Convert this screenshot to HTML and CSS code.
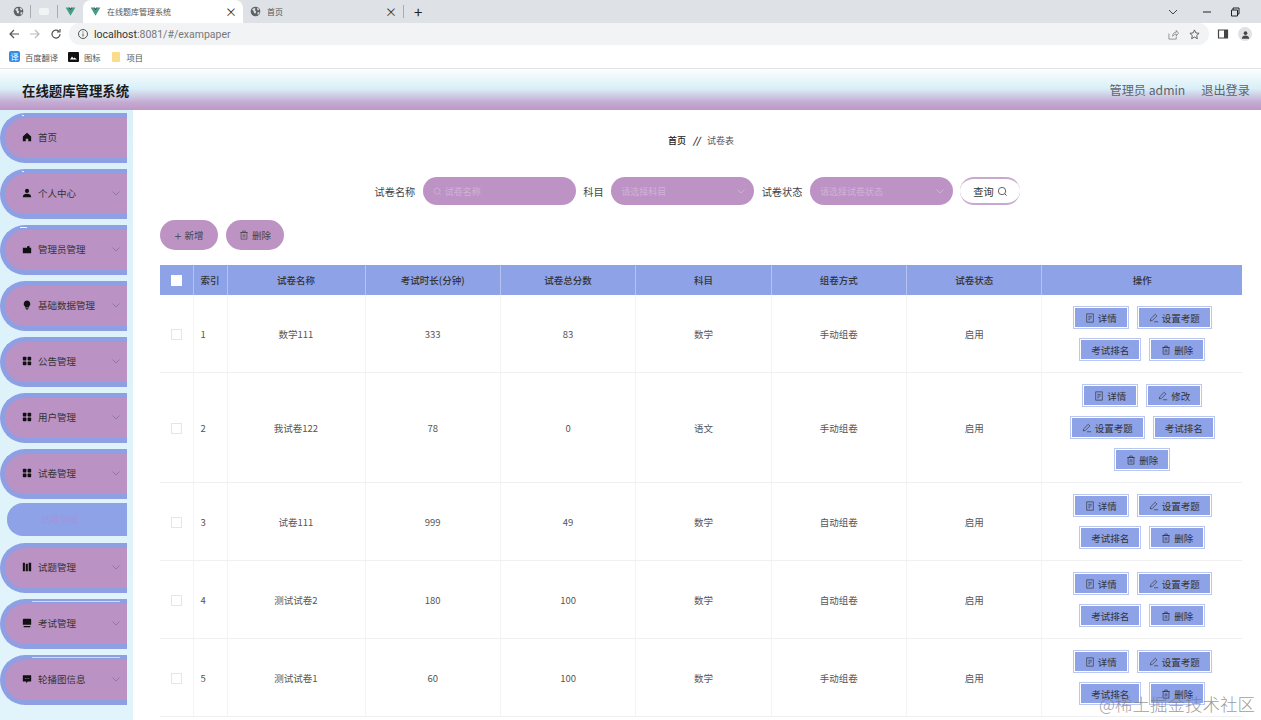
FILE: index.html
```html
<!DOCTYPE html>
<html lang="en">
<head>
  <meta charset="UTF-8">
  <meta name="viewport" content="width=device-width, initial-scale=1">
  <title>在线题库管理系统</title>
  <link rel="stylesheet" href="styles.css">
</head>
<body>

  <!-- shared icons -->
  <svg class="sprite" width="0" height="0">
    <symbol id="i-globe" viewBox="0 0 16 16"><circle cx="8" cy="8" r="7" fill="#5f6368"/><path d="M3 5l3-2 2 1-1 2 2 2-1 3-2-1-1-3zM10 2l3 2 0 2-2 0zM11 9l3 0-2 4-1-1z" fill="#dee1e6"/></symbol>
    <symbol id="i-vue" viewBox="0 0 16 16"><path d="M1 2h4l3 5 3-5h4L8 14z" fill="#3f9f80"/><path d="M5 2h2l1 2 1-2h2L8 7z" fill="#35495e"/></symbol>
    <symbol id="i-home" viewBox="0 0 12 12"><path d="M6 1L1 5.5V11h3.5V8h3v3H11V5.500z"/></symbol>
    <symbol id="i-user" viewBox="0 0 12 12"><circle cx="6" cy="3.500" r="2.500"/><path d="M1 11c0-3 2-4 5-4s5 1 5 4z"/></symbol>
    <symbol id="i-case" viewBox="0 0 12 12"><path d="M1 4.500h5V3l3-1v2.500h2V11H1z"/></symbol>
    <symbol id="i-bulb" viewBox="0 0 12 12"><path d="M6 .5a4 4 0 0 1 2.500 7.100V9h-5V7.600A4 4 0 0 1 6 .5zM4 9.800h4L7 11.500H5z"/></symbol>
    <symbol id="i-grid" viewBox="0 0 12 12"><rect x="1" y="1" width="4.300" height="4.300" rx=".8"/><rect x="6.700" y="1" width="4.300" height="4.300" rx=".8"/><rect x="1" y="6.700" width="4.300" height="4.300" rx=".8"/><rect x="6.700" y="6.700" width="4.300" height="4.300" rx=".8"/></symbol>
    <symbol id="i-bars" viewBox="0 0 12 12"><path d="M1 1h2.500v10H1zM4.500 2H7v9H4.500zM8 1l3 0v10H8z"/></symbol>
    <symbol id="i-screen" viewBox="0 0 12 12"><path d="M2 1h8a1 1 0 0 1 1 1v6H1V2a1 1 0 0 1 1-1zM2 9.500h8V11H2z"/></symbol>
    <symbol id="i-chat" viewBox="0 0 12 12"><path d="M1 1.500h10v7.500H7L5 11V9H1z"/><path d="M3.500 5h1v1h-1zM5.500 5h1v1h-1zM7.500 5h1v1h-1z" fill="#bb92c4"/></symbol>
    <symbol id="i-down" viewBox="0 0 10 10"><path d="M1.500 3.500L5 7l3.500-3.500" fill="none" stroke="currentColor"/></symbol>
    <symbol id="i-search" viewBox="0 0 12 12"><circle cx="5.500" cy="5.500" r="4" fill="none" stroke="currentColor"/><path d="M8.500 8.500l2 2" stroke="currentColor"/></symbol>
    <symbol id="i-doc" viewBox="0 0 12 12"><path d="M2 1h8v10H2zM4 4h4M4 6h4M4 8h2" fill="none" stroke="currentColor" stroke-width=".8"/></symbol>
    <symbol id="i-pen" viewBox="0 0 12 12"><path d="M7.500 1.500l2 2L4 9l-2.500.5L2 7zM6 10.500h5" fill="none" stroke="currentColor" stroke-width=".8"/></symbol>
    <symbol id="i-trash" viewBox="0 0 12 12"><path d="M2.500 3h7v8h-7zM1.500 3h9M4.500 3V1.200h3V3M5 5v4M7 5v4" fill="none" stroke="currentColor" stroke-width=".8"/></symbol>
  </svg>

  <div class="tab-strip">
    <svg class="tab-icon pinned-first"><use href="#i-globe"/></svg>
    <span class="tab-sep"></span>
    <span class="pinned-blank"></span>
    <span class="tab-sep"></span>
    <svg class="tab-icon pinned-vue"><use href="#i-vue"/></svg>
    <div class="tab active">
      <svg class="tab-icon"><use href="#i-vue"/></svg>
      <span class="tab-title">在线题库管理系统</span>
      <span class="tab-close">×</span>
    </div>
    <div class="tab">
      <svg class="tab-icon"><use href="#i-globe"/></svg>
      <span class="tab-title">首页</span>
      <span class="tab-close">×</span>
    </div>
    <span class="tab-sep"></span>
    <span class="tab-plus">+</span>
    <div class="window-buttons">
      <svg class="win-down" width="12" height="12" viewBox="0 0 12 12"><path d="M2 4l4 4 4-4" fill="none" stroke="#444"/></svg>
      <svg width="12" height="12" viewBox="0 0 12 12"><path d="M2 6h8" stroke="#222"/></svg>
      <svg width="12" height="12" viewBox="0 0 12 12"><path d="M2.500 4h6v6h-6zM4 4V2h6v6H8.500" fill="none" stroke="#222"/></svg>
    </div>
  </div>

  <div class="toolbar">
    <svg class="tool" viewBox="0 0 12 12"><path d="M11 6H2M6 2L2 6l4 4" fill="none" stroke="#555" stroke-width="1.200"/></svg>
    <svg class="tool" viewBox="0 0 12 12"><path d="M1 6h9M6 2l4 4-4 4" fill="none" stroke="#b8babd" stroke-width="1.200"/></svg>
    <svg class="tool" viewBox="0 0 12 12"><path d="M10 6a4 4 0 1 1-1.200-2.800M10 1v3H7" fill="none" stroke="#555" stroke-width="1.200"/></svg>
    <div class="omnibox">
      <svg class="omni-info" viewBox="0 0 12 12"><circle cx="6" cy="6" r="4.500" fill="none" stroke="#555"/><path d="M6 5.500v3M6 3.500v1" stroke="#555"/></svg>
      <span class="url"><b>localhost</b>:8081/#/exampaper</span>
      <svg class="omni-right" viewBox="0 0 12 12"><path d="M1 5v6h8V8M5 8c0-3 2-4.500 4-4.500V1.500l2.500 3-2.500 3V5.500C7.500 5.500 6 6.500 5 8z" fill="none" stroke="#777" stroke-width=".8"/></svg>
      <svg class="omni-right" viewBox="0 0 12 12"><path d="M6 1l1.500 3.300 3.500.4-2.600 2.400.7 3.500L6 8.800l-3.100 1.800.7-3.500L1 4.700l3.500-.4z" fill="none" stroke="#555"/></svg>
    </div>
    <svg class="tool panel" viewBox="0 0 12 12"><path d="M1.500 2h9v8h-9z" fill="none" stroke="#444" stroke-width="1.200"/><path d="M7 2h3.500v8H7z" fill="#444"/></svg>
    <span class="avatar"><svg viewBox="0 0 12 12"><circle cx="6" cy="4.500" r="2"/><path d="M2 10.500c0-2.500 2-3.500 4-3.500s4 1 4 3.500z"/></svg></span>
  </div>

  <div class="bookmarks">
    <span class="bookmark"><span class="bm-translate">译</span>百度翻译</span>
    <span class="bookmark"><svg class="bm-black" viewBox="0 0 11 10"><rect width="11" height="10" rx="1" fill="#111"/><path d="M2 7.500l2-3 1.500 2 1-1 2.500 2z" fill="#fff"/></svg>图标</span>
    <span class="bookmark"><span class="bm-folder"></span>项目</span>
  </div>

  <header class="app-header">
    <div class="app-title">在线题库管理系统</div>
    <div class="app-user">
      <span>管理员 admin</span>
      <span>退出登录</span>
    </div>
  </header>

  <div class="app-body">
    <aside class="sidebar">
      <div class="menu-item mark-dot"><svg class="menu-icon"><use href="#i-home"/></svg>首页</div>
      <div class="menu-item mark-dot"><svg class="menu-icon"><use href="#i-user"/></svg>个人中心<svg class="menu-arrow"><use href="#i-down"/></svg></div>
      <div class="menu-item mark-dash"><svg class="menu-icon"><use href="#i-case"/></svg>管理员管理<svg class="menu-arrow"><use href="#i-down"/></svg></div>
      <div class="menu-item"><svg class="menu-icon"><use href="#i-bulb"/></svg>基础数据管理<svg class="menu-arrow"><use href="#i-down"/></svg></div>
      <div class="menu-item"><svg class="menu-icon"><use href="#i-grid"/></svg>公告管理<svg class="menu-arrow"><use href="#i-down"/></svg></div>
      <div class="menu-item"><svg class="menu-icon"><use href="#i-grid"/></svg>用户管理<svg class="menu-arrow"><use href="#i-down"/></svg></div>
      <div class="menu-item"><svg class="menu-icon"><use href="#i-grid"/></svg>试卷管理<svg class="menu-arrow"><use href="#i-down"/></svg></div>
      <div class="menu-sub">试卷列表</div>
      <div class="menu-item"><svg class="menu-icon"><use href="#i-bars"/></svg>试题管理<svg class="menu-arrow"><use href="#i-down"/></svg></div>
      <div class="menu-item mark-line"><svg class="menu-icon"><use href="#i-screen"/></svg>考试管理<svg class="menu-arrow"><use href="#i-down"/></svg></div>
      <div class="menu-item mark-line"><svg class="menu-icon"><use href="#i-chat"/></svg>轮播图信息<svg class="menu-arrow"><use href="#i-down"/></svg></div>
    </aside>

    <main class="content">
      <div class="breadcrumb"><b>首页</b><i>//</i><span>试卷表</span></div>

      <form class="search-form">
        <label>试卷名称</label>
        <div class="field field-name"><svg class="field-search"><use href="#i-search"/></svg>试卷名称</div>
        <label>科目</label>
        <div class="field field-select">请选择科目<svg class="field-arrow"><use href="#i-down"/></svg></div>
        <label>试卷状态</label>
        <div class="field field-select">请选择试卷状态<svg class="field-arrow"><use href="#i-down"/></svg></div>
        <button type="button" class="search-btn">查询<svg><use href="#i-search"/></svg></button>
      </form>

      <div class="actions">
        <button type="button" class="pill-btn"><span class="plus">+</span>新增</button>
        <button type="button" class="pill-btn"><svg><use href="#i-trash"/></svg>删除</button>
      </div>

      <table class="paper-table">
        <colgroup>
          <col class="c-check"><col class="c-index"><col class="c-name"><col class="c-mid"><col class="c-mid"><col class="c-mid"><col class="c-mid"><col class="c-mid"><col>
        </colgroup>
        <thead>
          <tr>
            <th><span class="check head"></span></th>
            <th>索引</th><th>试卷名称</th><th>考试时长(分钟)</th><th>试卷总分数</th><th>科目</th><th>组卷方式</th><th>试卷状态</th><th>操作</th>
          </tr>
        </thead>
        <tbody>
          <tr>
            <td><span class="check"></span></td><td class="idx">1</td><td>数学111</td><td>333</td><td>83</td><td>数学</td><td>手动组卷</td><td>启用</td>
            <td><div class="ops">
              <a class="op"><svg><use href="#i-doc"/></svg>详情</a><a class="op"><svg><use href="#i-pen"/></svg>设置考题</a><a class="op">考试排名</a><a class="op"><svg><use href="#i-trash"/></svg>删除</a>
            </div></td>
          </tr>
          <tr>
            <td><span class="check"></span></td><td class="idx">2</td><td>我试卷122</td><td>78</td><td>0</td><td>语文</td><td>手动组卷</td><td>启用</td>
            <td><div class="ops">
              <a class="op"><svg><use href="#i-doc"/></svg>详情</a><a class="op"><svg><use href="#i-pen"/></svg>修改</a><a class="op"><svg><use href="#i-pen"/></svg>设置考题</a><a class="op">考试排名</a><a class="op"><svg><use href="#i-trash"/></svg>删除</a>
            </div></td>
          </tr>
          <tr>
            <td><span class="check"></span></td><td class="idx">3</td><td>试卷111</td><td>999</td><td>49</td><td>数学</td><td>自动组卷</td><td>启用</td>
            <td><div class="ops">
              <a class="op"><svg><use href="#i-doc"/></svg>详情</a><a class="op"><svg><use href="#i-pen"/></svg>设置考题</a><a class="op">考试排名</a><a class="op"><svg><use href="#i-trash"/></svg>删除</a>
            </div></td>
          </tr>
          <tr>
            <td><span class="check"></span></td><td class="idx">4</td><td>测试试卷2</td><td>180</td><td>100</td><td>数学</td><td>自动组卷</td><td>启用</td>
            <td><div class="ops">
              <a class="op"><svg><use href="#i-doc"/></svg>详情</a><a class="op"><svg><use href="#i-pen"/></svg>设置考题</a><a class="op">考试排名</a><a class="op"><svg><use href="#i-trash"/></svg>删除</a>
            </div></td>
          </tr>
          <tr>
            <td><span class="check"></span></td><td class="idx">5</td><td>测试试卷1</td><td>60</td><td>100</td><td>数学</td><td>手动组卷</td><td>启用</td>
            <td><div class="ops">
              <a class="op"><svg><use href="#i-doc"/></svg>详情</a><a class="op"><svg><use href="#i-pen"/></svg>设置考题</a><a class="op">考试排名</a><a class="op"><svg><use href="#i-trash"/></svg>删除</a>
            </div></td>
          </tr>
        </tbody>
      </table>
    </main>
  </div>

  <!-- watermark sits over the page -->
  <div class="watermark">@稀土掘金技术社区</div>

</body>
</html>
```
FILE: styles.css
```css
html, body {
  margin: 0;
  height: 720px;
  overflow: hidden;
}
body {
  position: relative;
  font-family: "Noto Sans CJK SC", "Noto Sans", sans-serif;
  font-size: 10px;
  color: #444;
  background: #fff;
}
.sprite {
  position: absolute;
}

/* Browser tabs */
.tab-strip {
  display: flex;
  align-items: center;
  height: 23px;
  background: #dee1e6;
}
.tab-icon {
  width: 11px;
  height: 11px;
  flex: none;
}
.pinned-first {
  margin-left: 13px;
  margin-right: 6px;
}
.tab-sep {
  width: 1px;
  height: 13px;
  background: #a9acb2;
}
.pinned-blank {
  width: 10px;
  height: 7px;
  margin: 0 8px;
  background: #f2f3f5;
  border-radius: 2px;
}
.pinned-vue {
  margin: 0 7px;
}
.tab {
  display: flex;
  align-items: center;
  width: 160px;
  height: 23px;
  padding: 0 6px 0 7px;
  box-sizing: border-box;
  font-size: 8px;
  color: #555;
}
.tab.active {
  background: #fff;
  border-radius: 8px 8px 0 0;
}
.tab-title {
  margin-left: 6px;
  flex: 1;
}
.tab-close {
  font-size: 12px;
  color: #333;
}
.tab-plus {
  margin-left: 10px;
  font-size: 15px;
  line-height: 1;
  color: #222;
}
.window-buttons {
  margin-left: auto;
  margin-right: 20px;
  display: flex;
  gap: 16px;
}
.win-down {
  margin-right: 6px;
}

/* Browser toolbar */
.toolbar {
  display: flex;
  align-items: center;
  height: 22px;
  background: #fff;
  padding-left: 8px;
}
.tool {
  width: 12px;
  height: 12px;
  margin-right: 9px;
  flex: none;
}
.omnibox {
  display: flex;
  align-items: center;
  width: 1140px;
  height: 22px;
  margin-left: -2px;
  padding: 0 8px;
  box-sizing: border-box;
  background: #f1f3f4;
  border-radius: 11px;
}
.omni-info {
  width: 12px;
  height: 12px;
  margin-right: 5px;
}
.url {
  flex: 1;
  font-family: Roboto, sans-serif;
  font-size: 10.5px;
  color: #777;
}
.url b {
  font-weight: 400;
  color: #333;
}
.omni-right {
  width: 11px;
  height: 11px;
  margin-left: 10px;
}
.omni-right:last-child {
  margin-right: 1px;
}
.panel {
  margin-left: 8px;
  margin-right: 9px;
}
.avatar {
  display: flex;
  align-items: center;
  justify-content: center;
  width: 14px;
  height: 14px;
  background: #dfe1e5;
  border-radius: 50%;
  fill: #444;
}
.avatar svg {
  width: 11px;
  height: 11px;
}

/* Bookmarks */
.bookmarks {
  display: flex;
  align-items: center;
  gap: 10px;
  height: 23px;
  padding-left: 9px;
  border-bottom: 1px solid #e3e3e3;
  background: #fff;
  font-size: 8.250px;
  color: #555;
}
.bookmark {
  display: flex;
  align-items: center;
  gap: 5px;
}
.bm-translate {
  width: 11px;
  height: 11px;
  background: #2f8fe6;
  border-radius: 2px;
  color: #fff;
  font-size: 8px;
  line-height: 11px;
  text-align: center;
}
.bm-black {
  width: 11px;
  height: 10px;
}
.bm-folder {
  width: 8px;
  height: 10px;
  margin-left: 1px;
  margin-right: 2px;
  background: #fbdc8c;
  border-radius: 1px;
}

/* App header */
.app-header {
  display: flex;
  align-items: center;
  justify-content: space-between;
  height: 41px;
  padding: 0 11px 0 22px;
  background: linear-gradient(180deg, #fbfeff 0%, #d8eff7 48%, #c3aad2 82%, #bf98c8 100%);
}
.app-title {
  font-size: 13.400px;
  font-weight: 700;
  color: #1a1a1a;
}
.app-user {
  display: flex;
  gap: 16px;
  font-size: 12.200px;
  color: #5b6470;
}

/* Layout */
.app-body {
  display: flex;
  height: 610px;
}
.sidebar {
  flex: none;
  width: 133px;
  padding-top: 3px;
  box-sizing: border-box;
  background: linear-gradient(180deg, #dbf1fa, #e2f4fb);
}

/* Sidebar menu */
.menu-item {
  position: relative;
  display: flex;
  align-items: center;
  width: 127px;
  height: 50px;
  margin-bottom: 6px;
  padding: 0 0 2px 17px;
  box-sizing: border-box;
  background: #bb92c4;
  border: 5px solid #8f9fe4;
  border-right: 0;
  border-radius: 25px 0 0 25px;
  font-size: 9.500px;
  color: #333;
}
.menu-icon {
  width: 10px;
  height: 10px;
  margin-right: 6px;
  fill: #111;
}
.menu-arrow {
  position: absolute;
  right: 6px;
  top: 14px;
  width: 10px;
  height: 10px;
  color: #8d7aa3;
}
.mark-dot::before,
.mark-dash::before,
.mark-line::before {
  content: "";
  position: absolute;
  top: -3px;
  height: 1px;
  background: #eef2fc;
}
.mark-dot::before {
  left: 17px;
  width: 2px;
}
.mark-dash::before {
  left: 15px;
  width: 7px;
}
.mark-line::before {
  left: 27px;
  width: 88px;
  opacity: .7;
}
.menu-item:nth-child(7) {
  margin-bottom: 4px;
}
.menu-sub {
  width: 120px;
  height: 33px;
  margin: 0 0 7px 7px;
  padding-left: 34px;
  box-sizing: border-box;
  line-height: 32px;
  background: #8ea2e8;
  border-radius: 16px 0 0 16px;
  font-size: 9.500px;
  color: #a394dc;
}

/* Main content */
.content {
  flex: 1;
  min-width: 0;
  padding: 0 19px 0 27px;
}
.breadcrumb {
  display: flex;
  justify-content: center;
  align-items: center;
  gap: 6px;
  height: 15px;
  margin-top: 23px;
  font-size: 9px;
  color: #555;
}
.breadcrumb b {
  color: #222;
  font-weight: 500;
}
.breadcrumb i {
  font-weight: 700;
  color: #222;
  margin: 0 1px;
}
.search-form {
  display: flex;
  justify-content: center;
  align-items: center;
  gap: 7.500px;
  height: 28px;
  margin: 29px 7px 0 0;
  font-size: 10.200px;
  color: #444;
}
.field {
  display: flex;
  align-items: center;
  position: relative;
  height: 28px;
  padding-left: 10px;
  box-sizing: border-box;
  background: #bd93c6;
  border-radius: 14px;
  color: #cfb2d6;
  font-size: 9px;
}
.field-name {
  width: 153px;
}
.field-select {
  width: 143px;
}
.field-search {
  width: 9px;
  height: 9px;
  margin-right: 3px;
  color: #cfb2d6;
}
.field-arrow {
  position: absolute;
  right: 8px;
  top: 9px;
  width: 10px;
  height: 10px;
  color: #cfb2d6;
}
.search-btn {
  display: flex;
  align-items: center;
  justify-content: center;
  gap: 3px;
  width: 60px;
  height: 28px;
  padding: 0;
  background: #fff;
  border: 0;
  border-top: 2px solid #c9a8d0;
  border-bottom: 2px solid #c9a8d0;
  border-radius: 14px;
  font: inherit;
  color: #333;
}
.search-btn svg {
  width: 11px;
  height: 11px;
  color: #555;
}
.actions {
  display: flex;
  gap: 8px;
  margin-top: 15px;
}
.pill-btn {
  display: flex;
  align-items: center;
  justify-content: center;
  gap: 3px;
  width: 58px;
  height: 30px;
  padding: 0;
  background: #bd93c4;
  border: 0;
  border-radius: 15px;
  font-family: inherit;
  font-size: 9.500px;
  color: #444;
}
.pill-btn svg {
  width: 10px;
  height: 10px;
}
.plus {
  font-size: 13px;
  line-height: 1;
  font-weight: 300;
}

/* Table */
.paper-table {
  width: 1082px;
  margin-top: 15px;
  border-collapse: collapse;
  table-layout: fixed;
  font-size: 9.500px;
}
.c-check {
  width: 33px;
}
.c-index {
  width: 34px;
}
.c-name {
  width: 138px;
}
.c-mid {
  width: 135.400px;
}
.paper-table th {
  height: 30px;
  padding: 0;
  background: #8ea2e8;
  border-right: 1px solid #b6c3f2;
  font-weight: 500;
  color: #333;
}
.paper-table th:last-child {
  border-right: 0;
}
.paper-table td {
  padding: 0;
  text-align: center;
  border-right: 1px solid #f4f4f6;
  border-bottom: 1px solid #f0f0f2;
  color: #555;
}
.paper-table td:last-child {
  border-right: 0;
}
.paper-table td.idx {
  text-align: left;
  padding-left: 7px;
}
.check {
  display: block;
  width: 9px;
  height: 9px;
  margin: 1px auto 0;
  background: #fff;
  border: 1px solid #e6e6e6;
}
.check.head {
  border-color: #fff;
}
.ops {
  display: flex;
  flex-wrap: wrap;
  justify-content: center;
  gap: 9px 8px;
  padding: 11px 10px;
}
.op {
  display: flex;
  align-items: center;
  justify-content: center;
  gap: 3px;
  height: 19px;
  padding: 0 10px;
  background: #8ea2e8;
  border: 1px solid #fff;
  outline: 1px solid #bcc7ef;
  outline-offset: 0;
  margin: 1px;
  color: #333;
  white-space: nowrap;
}
.op svg {
  width: 10px;
  height: 10px;
}

.watermark {
  position: absolute;
  right: 6px;
  bottom: 4px;
  font-size: 17.500px;
  font-weight: 300;
  color: rgba(120, 120, 125, .75);
}
```
